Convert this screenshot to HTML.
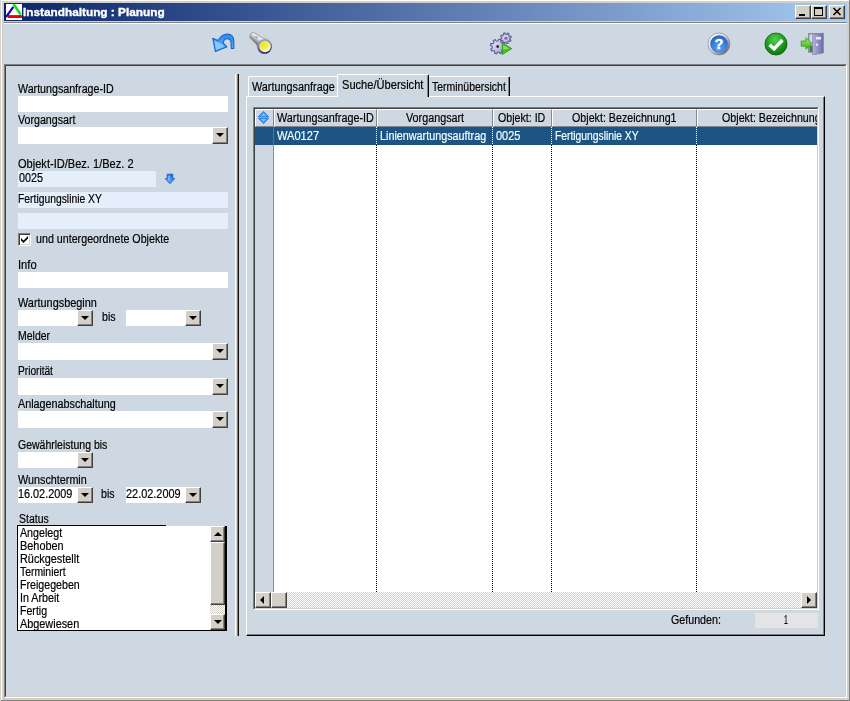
<!DOCTYPE html>
<html>
<head>
<meta charset="utf-8">
<title>Instandhaltung : Planung</title>
<style>
html,body{margin:0;padding:0;}
body{width:850px;height:701px;overflow:hidden;background:#d4d0c8;position:relative;
  font-family:"Liberation Sans",sans-serif;font-size:12px;color:#000;}
div,span{position:absolute;box-sizing:border-box;white-space:nowrap;}
svg{position:absolute;overflow:visible;}
.bg{background:#ced8e2;}
.t{font-size:12px;line-height:13px;height:13px;transform-origin:0 0;-webkit-text-stroke:0.2px currentColor;}
.tb{font-size:11px;line-height:13px;height:13px;transform-origin:0 0;font-weight:bold;color:#fff;-webkit-text-stroke:0.35px #fff;}
.w{color:#f0ffff;}
.inp{background:#fff;}
.ro{background:#e4effb;}
.btn{width:16px;height:16px;background:#d4d0c8;border:1px solid;border-color:#fff #404040 #404040 #fff;
  box-shadow:inset -1px -1px 0 #808080, inset 1px 1px 0 #d4d0c8;}
.btn:after{content:"";position:absolute;left:3px;top:5px;border:4px solid transparent;border-top-color:#000;border-bottom-width:0;width:0;height:0;}
.sb{background:#d4d0c8;border:1px solid;border-color:#fff #404040 #404040 #fff;box-shadow:inset -1px -1px 0 #808080, inset 1px 1px 0 #d4d0c8;}
i{position:absolute;width:0;height:0;border:4px solid transparent;}
i.up{left:3px;top:1px;border-bottom-color:#000;}
i.dn{left:3px;top:5px;border-top-color:#000;}
i.lf{left:0px;top:3px;border-right-color:#000;}
i.rt2{left:5px;top:3px;border-left-color:#000;}
.hd{top:0;height:18px;background:#cfd8e2;border:1px solid;border-color:#fff #808890 #808890 #fff;overflow:hidden;}
.dot{top:36px;width:1px;height:447px;background:repeating-linear-gradient(to bottom,#000 0,#000 1px,transparent 1px,transparent 2px);}
.dotw{top:18px;width:1px;height:18px;background:repeating-linear-gradient(to bottom,#fff 0,#fff 1px,transparent 1px,transparent 2px);}
.trk{background:#eae8e4;background-image:repeating-conic-gradient(#fff 0 25%,#d4d0c8 0 50%);background-size:2px 2px;}
.cap{width:16px;height:14px;background:#d4d0c8;border:1px solid;border-color:#fff #404040 #404040 #fff;box-shadow:inset -1px -1px 0 #808080;}
</style>
</head>
<body>
<!-- window frame -->
<div style="left:1px;top:0px;width:848px;height:1px;background:#fff"></div>
<div style="left:1px;top:0px;width:1px;height:700px;background:#fff"></div>
<div style="left:1px;top:700px;width:849px;height:1px;background:#808080"></div>
<div style="left:849px;top:0px;width:1px;height:701px;background:#808080"></div>

<!-- title bar -->
<div style="left:4px;top:3px;width:843px;height:18px;background:linear-gradient(to right,#0a246a 0%,#a6caf0 100%);"></div>
<svg style="left:6px;top:4px" width="16" height="16" viewBox="0 0 16 16">
  <rect width="16" height="16" fill="#fff"/>
  <rect x="1.8" y="11.1" width="14.2" height="2.9" fill="#f00000"/>
  <path d="M0 13.2 L7.3 2.8" stroke="#0808c0" stroke-width="2.2" fill="none"/>
  <path d="M7.6 0.3 L14.6 10.6" stroke="#18e018" stroke-width="2.6" fill="none"/>
</svg>
<div class="cap" style="left:795px;top:5px"><div style="left:3px;top:8px;width:6px;height:2px;background:#000"></div></div>
<div class="cap" style="left:811px;top:5px"><div style="left:2px;top:1px;width:9px;height:9px;border:1px solid #000;border-top-width:2px"></div></div>
<div class="cap" style="left:829px;top:5px"><svg style="left:3px;top:2px" width="8" height="7" viewBox="0 0 8 7"><path d="M0.5 0 L7.5 7 M7.5 0 L0.5 7" stroke="#000" stroke-width="1.6"/></svg></div>

<!-- client -->
<div class="bg" style="left:4px;top:22px;width:843px;height:42px"></div>
<div style="left:4px;top:22px;width:843px;height:1px;background:#808080"></div>
<div style="left:4px;top:23px;width:843px;height:1px;background:#fff"></div>

<!-- big sunken panel -->
<div class="bg" style="left:4px;top:64px;width:843px;height:634px;border:1px solid;border-color:#808080 #fff #fff #808080"></div>
<div style="left:5px;top:65px;width:841px;height:632px;border:1px solid;border-color:#404040 #d4d0c8 #d4d0c8 #404040"></div>

<!-- TOOLBAR -->
<svg width="0" height="0" style="left:0;top:0"><defs>
  <linearGradient id="gUndo" x1="0" y1="0" x2="0" y2="1"><stop offset="0" stop-color="#2a86e8"/><stop offset="1" stop-color="#6ab8f6"/></linearGradient>
  <linearGradient id="gCyl" gradientUnits="userSpaceOnUse" x1="10" y1="3" x2="4" y2="11"><stop offset="0" stop-color="#fafafa"/><stop offset="0.45" stop-color="#e0e0e0"/><stop offset="1" stop-color="#5c5c64"/></linearGradient>
  <radialGradient id="gLens" cx="0.35" cy="0.3" r="0.75"><stop offset="0" stop-color="#e8e810"/><stop offset="0.55" stop-color="#f0f058"/><stop offset="1" stop-color="#ffffee"/></radialGradient>
  <radialGradient id="gHelp" cx="0.5" cy="0.75" r="0.8"><stop offset="0" stop-color="#5aa4f0"/><stop offset="0.6" stop-color="#3478d4"/><stop offset="1" stop-color="#2460b8"/></radialGradient>
  <linearGradient id="gRing" x1="0.1" y1="0.1" x2="0.9" y2="0.9"><stop offset="0" stop-color="#ffffff"/><stop offset="0.5" stop-color="#d0d0d8"/><stop offset="1" stop-color="#5c5c64"/></linearGradient>
  <radialGradient id="gOk" cx="0.45" cy="0.3" r="0.8"><stop offset="0" stop-color="#52d052"/><stop offset="0.55" stop-color="#1a9a1a"/><stop offset="1" stop-color="#086808"/></radialGradient>
  <linearGradient id="gDoor" x1="0" y1="0" x2="1" y2="0"><stop offset="0" stop-color="#b4b4e0"/><stop offset="1" stop-color="#6c6ca8"/></linearGradient>
  <linearGradient id="gArr" x1="0" y1="0" x2="0" y2="1"><stop offset="0" stop-color="#a0f060"/><stop offset="1" stop-color="#40b020"/></linearGradient>
  <linearGradient id="gGear" x1="0" y1="0" x2="1" y2="1"><stop offset="0" stop-color="#eeeefa"/><stop offset="1" stop-color="#a0a0c8"/></linearGradient>
  <linearGradient id="gRim" x1="0.3" y1="0" x2="0.6" y2="1"><stop offset="0" stop-color="#a8a8dc"/><stop offset="0.5" stop-color="#6c6ca8"/><stop offset="1" stop-color="#1c1c52"/></linearGradient>
</defs></svg>
<!-- undo -->
<svg style="left:211px;top:32px" width="24" height="24" viewBox="0 0 24 24">
  <path d="M1.8 6.3 L7 8.6 C9.5 4 13 2 16.4 2 C20 2 22.6 4.5 22.8 9 L22.8 16.5 L20.3 16.5 L20 10 C19.8 7.5 17.5 6.3 15.5 6.7 C13.8 7 12.5 9 12 10.8 L16 14.8 L4.4 19.5 Z" fill="url(#gUndo)" stroke="#1264cc" stroke-width="1.1" stroke-linejoin="round"/>
  <path d="M3.2 8.5 L7 10.2 L10.5 12 L13.5 14.5 L5.2 17.8 Z" fill="#86c8fa"/>
</svg>
<!-- flashlight -->
<svg style="left:249px;top:31px" width="24" height="24" viewBox="0 0 24 24">
  <path d="M0.8 6.4 L1.3 3 L4.2 1.2 L13 6.6 L20 9.5 L10.5 21 L7.6 13.6 Z" fill="url(#gCyl)" stroke="#8c8c94" stroke-width="0.8" stroke-linejoin="round"/>
  <ellipse cx="7.4" cy="6.4" rx="1.5" ry="1" fill="#9c9cb4" transform="rotate(35 7.4 6.4)"/>
  <circle cx="15.5" cy="15.4" r="7.4" fill="url(#gRim)"/>
  <circle cx="16" cy="15.5" r="5.7" fill="url(#gLens)"/>
</svg>
<!-- gears -->
<svg style="left:489px;top:32px" width="24" height="24" viewBox="0 0 24 24">
  <path d="M20.7 7.3 L22.0 8.2 L21.2 9.6 L19.8 9.0 L18.8 9.7 L19.1 11.3 L17.6 11.7 L17.0 10.3 L15.8 10.2 L14.9 11.5 L13.5 10.7 L14.1 9.3 L13.4 8.3 L11.8 8.6 L11.4 7.1 L12.8 6.5 L12.9 5.3 L11.6 4.4 L12.4 3.0 L13.8 3.6 L14.8 2.9 L14.5 1.3 L16.0 0.9 L16.6 2.3 L17.8 2.4 L18.7 1.1 L20.1 1.9 L19.5 3.3 L20.2 4.3 L21.8 4.0 L22.2 5.5 L20.8 6.1 Z" fill="url(#gGear)" stroke="#5e5e92" stroke-width="1.1" stroke-linejoin="round"/>
  <circle cx="16.8" cy="6.3" r="1.5" fill="#7070a4"/>
  <path d="M14.3 14.9 L16.0 15.7 L15.4 17.8 L13.5 17.5 L12.5 18.8 L13.1 20.5 L11.2 21.6 L10.1 20.0 L8.4 20.2 L7.6 21.9 L5.5 21.3 L5.8 19.4 L4.5 18.4 L2.8 19.0 L1.7 17.1 L3.3 16.0 L3.1 14.3 L1.4 13.5 L2.0 11.4 L3.9 11.7 L4.9 10.4 L4.3 8.7 L6.2 7.6 L7.3 9.2 L9.0 9.0 L9.8 7.3 L11.9 7.9 L11.6 9.8 L12.9 10.8 L14.6 10.2 L15.7 12.1 L14.1 13.2 Z" fill="url(#gGear)" stroke="#5e5e92" stroke-width="1.1" stroke-linejoin="round"/>
  <circle cx="8.7" cy="14.6" r="2.4" fill="#c4c4e4"/>
  <circle cx="8.7" cy="14.6" r="1.3" fill="#14142c"/>
  <path d="M13.2 11.2 L22.8 16.6 L13.2 22.5 Z" fill="#4cc028" stroke="#2a9614" stroke-width="0.9" stroke-linejoin="round"/>
  <path d="M14.2 13.2 L20 16.5 L14.2 17.5 Z" fill="#8ce058"/>
</svg>
<!-- help -->
<svg style="left:707px;top:32px" width="24" height="24" viewBox="0 0 24 24">
  <circle cx="12" cy="12" r="11" fill="url(#gRing)" stroke="#888890" stroke-width="0.7"/>
  <circle cx="12" cy="12" r="8.8" fill="url(#gHelp)"/>
  <text x="12" y="17" text-anchor="middle" font-family="Liberation Sans" font-weight="bold" font-size="14.5" fill="#fff" stroke="#fff" stroke-width="0.4" letter-spacing="0">?</text>
</svg>
<!-- ok -->
<svg style="left:764px;top:32px" width="24" height="24" viewBox="0 0 24 24">
  <circle cx="12" cy="12" r="11" fill="url(#gOk)" stroke="#0a5c0a" stroke-width="0.8"/>
  <path d="M5.6 12.7 L10.1 16.9 L18.4 8" fill="none" stroke="#fff" stroke-width="3.4" stroke-linejoin="miter"/>
</svg>
<!-- exit -->
<svg style="left:800px;top:32px" width="24" height="24" viewBox="0 0 24 24">
  <rect x="8" y="1" width="15.3" height="19.7" fill="#8c8c9c"/>
  <rect x="9.5" y="2.5" width="11.5" height="17.5" fill="#d8e0f0"/><rect x="9.5" y="13.5" width="4" height="6.5" fill="#3a8a2a"/>
  <path d="M12.4 3.2 L23.3 1 V21 L12.6 22.8 Z" fill="url(#gDoor)" stroke="#6a6aa0" stroke-width="0.5"/>
  <rect x="16" y="4.9" width="5" height="2.6" fill="#e8e8fa"/>
  <rect x="16" y="11.7" width="2.1" height="2.1" fill="#e8e8fa"/>
  <path d="M1.2 9.1 H5.9 V5.7 L12.2 11.5 L5.9 17.2 V14.2 H1.2 Z" fill="url(#gArr)" stroke="#2a9a18" stroke-width="0.8" stroke-linejoin="round"/>
</svg>

<!-- LEFT -->
<!-- separator -->
<div style="left:235px;top:74px;width:1px;height:562px;background:#fff"></div>
<div style="left:236px;top:74px;width:1px;height:562px;background:#d4d0c8"></div>
<div style="left:237px;top:74px;width:1px;height:562px;background:#808080"></div>
<div style="left:238px;top:74px;width:1px;height:562px;background:#101010"></div>

<div class="inp" style="left:18px;top:96px;width:210px;height:16px"></div>

<div class="inp" style="left:18px;top:127px;width:210px;height:17px"><div class="btn" style="right:0;top:0;height:17px"></div></div>

<div class="ro" style="left:18px;top:171px;width:138px;height:16px"></div>
<svg style="left:164px;top:173px" width="12" height="12" viewBox="0 0 12 12">
  <defs><linearGradient id="gDn" x1="0" y1="0" x2="0" y2="1"><stop offset="0" stop-color="#1c5cc4"/><stop offset="0.5" stop-color="#3a8ae8"/><stop offset="1" stop-color="#5aa8f8"/></linearGradient></defs>
  <path d="M3.2 1.2 H8.8 V5.6 H10.8 L6 10.8 L1.2 5.6 H3.2 Z" fill="url(#gDn)" stroke="#1c5cc4" stroke-width="0.8" stroke-linejoin="round"/>
  <path d="M4.2 2.6 H6.2 V6.4 L5 8 L3.4 6.4 H4.2 Z" fill="#8cc8ff" opacity="0.8"/>
</svg>
<div class="ro" style="left:18px;top:192px;width:210px;height:16px"></div>
<div class="ro" style="left:18px;top:213px;width:210px;height:16px"></div>

<div style="left:18px;top:233px;width:13px;height:13px;background:#fff;border:1px solid;border-color:#808080 #fff #fff #808080;box-shadow:inset 1px 1px 0 #404040, inset -1px -1px 0 #d4d0c8">
  <svg style="left:2px;top:2px" width="7" height="7" viewBox="0 0 7 7"><path d="M0 2 L2.5 4.5 L7 0 V2.6 L2.5 7.1 L0 4.6 Z" fill="#000"/></svg>
</div>

<div class="inp" style="left:18px;top:272px;width:210px;height:16px"></div>

<div class="inp" style="left:18px;top:310px;width:75px;height:16px"><div class="btn" style="right:0;top:0"></div></div>
<div class="inp" style="left:126px;top:310px;width:75px;height:16px"><div class="btn" style="right:0;top:0"></div></div>

<div class="inp" style="left:18px;top:343px;width:210px;height:17px"><div class="btn" style="right:0;top:0;height:17px"></div></div>

<div class="inp" style="left:18px;top:378px;width:210px;height:17px"><div class="btn" style="right:0;top:0;height:17px"></div></div>

<div class="inp" style="left:18px;top:411px;width:210px;height:17px"><div class="btn" style="right:0;top:0;height:17px"></div></div>

<div class="inp" style="left:18px;top:452px;width:75px;height:16px"><div class="btn" style="right:0;top:0"></div></div>

<div class="inp" style="left:18px;top:487px;width:75px;height:16px"><div class="btn" style="right:0;top:0"></div></div>
<div class="inp" style="left:126px;top:487px;width:75px;height:16px"><div class="btn" style="right:0;top:0"></div></div>

<!-- listbox -->
<div class="inp" style="left:17px;top:526px;width:210px;height:105px;border:solid #000;border-width:0 2px 1px 1px"></div>
<div style="left:17px;top:525px;width:149px;height:1px;background:#000"></div>
<!-- listbox scrollbar -->
<div class="trk" style="left:210px;top:526px;width:15px;height:104px"></div>
<div class="sb" style="left:210px;top:526px;width:15px;height:16px"><i class="up"></i></div>
<div class="sb" style="left:210px;top:542px;width:15px;height:63px"></div>
<div class="sb" style="left:210px;top:614px;width:15px;height:16px"><i class="dn"></i></div>

<!-- RIGHT -->
<!-- tab panel -->
<div style="left:246px;top:96px;width:579px;height:540px;border:solid;border-width:1px;border-color:#fff #000 #000 #fff;box-shadow:inset -1px -1px 0 #808080"></div>
<!-- tab 1 -->
<div style="left:248px;top:76px;width:90px;height:20px;border:1px solid #fff;border-bottom:0;border-right:0;border-radius:2px 0 0 0"></div>
<!-- tab 3 -->
<div style="left:429px;top:76px;width:81px;height:20px;border:solid;border-width:1px 1px 0 0;border-color:#fff #000 #000 #fff;border-radius:0 2px 0 0;box-shadow:inset -1px 0 0 #808080"></div>
<!-- tab 2 selected -->
<div class="bg" style="left:337px;top:74px;width:92px;height:23px;border:solid;border-width:1px 1px 0 1px;border-color:#fff #000 #000 #fff;border-radius:2px 2px 0 0;box-shadow:inset -1px 0 0 #808080"></div>

<!-- grid -->
<div style="left:253px;top:107px;width:566px;height:503px;background:#fff;border:1px solid;border-color:#808080 #fff #fff #808080"></div>
<div style="left:254px;top:108px;width:564px;height:501px;border:1px solid;border-color:#404040 #d4d0c8 #d4d0c8 #404040"></div>
<div id="gridc" style="left:255px;top:109px;width:562px;height:483px;overflow:hidden">
  <!-- first column body -->
  <div style="left:0;top:18px;width:18px;height:465px;background:#ced8e2"></div>
  <div style="left:18px;top:18px;width:1px;height:465px;background:#868e98"></div>
  <!-- header -->
  <div class="hd" style="left:0;width:19px"></div>
  <div class="hd" style="left:19px;width:103px"></div>
  <div class="hd" style="left:122px;width:116px"></div>
  <div class="hd" style="left:238px;width:59px"></div>
  <div class="hd" style="left:297px;width:145px"></div>
  <div class="hd" style="left:442px;width:156px"></div>
  <svg style="left:3px;top:2px" width="11" height="13" viewBox="0 0 11 13">
    <path d="M5.5 0.4 L10.6 5.8 H0.4 Z" fill="#3f9af4" stroke="#1c6ccc" stroke-width="0.8" stroke-linejoin="round"/>
    <path d="M5.5 12.6 L10.6 7.2 H0.4 Z" fill="#3f9af4" stroke="#1c6ccc" stroke-width="0.8" stroke-linejoin="round"/>
    <path d="M5.5 2.2 L8 5 H3 Z" fill="#7cc4ff"/>
    <path d="M5.5 10.8 L8 8 H3 Z" fill="#7cc4ff"/>
  </svg>
  <!-- selected row -->
  <div style="left:0;top:18px;width:562px;height:18px;background:#1e5483"></div><div style="left:18px;top:18px;width:1px;height:18px;background:#4a78a0"></div>
  <!-- dotted dividers -->
  <div class="dot" style="left:121px"></div>
  <div class="dot" style="left:237px"></div>
  <div class="dot" style="left:296px"></div>
  <div class="dot" style="left:441px"></div>
  <div class="dotw" style="left:121px"></div>
  <div class="dotw" style="left:237px"></div>
  <div class="dotw" style="left:296px"></div>
  <div class="dotw" style="left:441px"></div>
</div>
<!-- h scrollbar -->
<div class="trk" style="left:255px;top:592px;width:562px;height:16px"></div>
<div class="sb" style="left:255px;top:592px;width:16px;height:16px"><i class="lf" style="left:0px;top:3px"></i></div>
<div class="sb" style="left:271px;top:592px;width:16px;height:16px"></div>
<div class="sb" style="left:801px;top:592px;width:16px;height:16px"><i class="rt2"></i></div>

<div style="left:755px;top:613px;width:63px;height:15px;background:#e4e4e4"></div>

<!-- TEXT -->
<div style="left:0;top:0;width:850px;height:701px;will-change:transform">
<span class="tb" style="left:23.20px;top:5.5px;transform:scaleX(1.0728)">Instandhaltung : Planung</span>
<span class="t" style="left:17.89px;top:82.5px;transform:scaleX(0.8889)">Wartungsanfrage-ID</span>
<span class="t" style="left:17.89px;top:113.5px;transform:scaleX(0.8868)">Vorgangsart</span>
<span class="t" style="left:18.42px;top:157.5px;transform:scaleX(0.9217)">Objekt-ID/Bez. 1/Bez. 2</span>
<span class="t" style="left:18.55px;top:171.5px;transform:scaleX(0.8932)">0025</span>
<span class="t" style="left:18.14px;top:192.5px;transform:scaleX(0.8614)">Fertigungslinie XY</span>
<span class="t" style="left:36.33px;top:232.5px;transform:scaleX(0.8911)">und untergeordnete Objekte</span>
<span class="t" style="left:17.95px;top:258.5px;transform:scaleX(0.9306)">Info</span>
<span class="t" style="left:17.89px;top:296.5px;transform:scaleX(0.9070)">Wartungsbeginn</span>
<span class="t" style="left:101.84px;top:310.5px;transform:scaleX(0.8850)">bis</span>
<span class="t" style="left:18.13px;top:329.5px;transform:scaleX(0.8732)">Melder</span>
<span class="t" style="left:18.16px;top:364.5px;transform:scaleX(0.8447)">Priorität</span>
<span class="t" style="left:18.00px;top:397.5px;transform:scaleX(0.8981)">Anlagenabschaltung</span>
<span class="t" style="left:18.45px;top:438.5px;transform:scaleX(0.8752)">Gewährleistung bis</span>
<span class="t" style="left:17.89px;top:473.5px;transform:scaleX(0.8992)">Wunschtermin</span>
<span class="t" style="left:18.21px;top:487.5px;transform:scaleX(0.9041)">16.02.2009</span>
<span class="t" style="left:101.34px;top:487.5px;transform:scaleX(0.8850)">bis</span>
<span class="t" style="left:126.43px;top:487.5px;transform:scaleX(0.9087)">22.02.2009</span>
<span class="t" style="left:19.45px;top:512.5px;transform:scaleX(0.8727)">Status</span>
<span class="t" style="left:20.00px;top:526.5px;transform:scaleX(0.8889)">Angelegt</span>
<span class="t" style="left:20.09px;top:539.5px;transform:scaleX(0.9081)">Behoben</span>
<span class="t" style="left:20.09px;top:552.5px;transform:scaleX(0.9058)">Rückgestellt</span>
<span class="t" style="left:20.28px;top:565.5px;transform:scaleX(0.8649)">Terminiert</span>
<span class="t" style="left:20.11px;top:578.5px;transform:scaleX(0.8869)">Freigegeben</span>
<span class="t" style="left:19.99px;top:591.5px;transform:scaleX(0.8936)">In Arbeit</span>
<span class="t" style="left:20.12px;top:604.5px;transform:scaleX(0.8831)">Fertig</span>
<span class="t" style="left:20.00px;top:617.5px;transform:scaleX(0.9052)">Abgewiesen</span>
<span class="t" style="left:251.89px;top:80.5px;transform:scaleX(0.9033)">Wartungsanfrage</span>
<span class="t" style="left:341.82px;top:78.5px;transform:scaleX(0.9247)">Suche/Übersicht</span>
<span class="t" style="left:432.18px;top:80.5px;transform:scaleX(0.8711)">Terminübersicht</span>
<span class="t" style="left:276.69px;top:111.5px;transform:scaleX(0.9001)">Wartungsanfrage-ID</span>
<span class="t" style="left:405.99px;top:111.5px;transform:scaleX(0.8977)">Vorgangsart</span>
<span class="t" style="left:498.25px;top:111.5px;transform:scaleX(0.8863)">Objekt: ID</span>
<span class="t" style="left:571.94px;top:111.5px;transform:scaleX(0.8903)">Objekt: Bezeichnung1</span>
<div style="left:700px;top:110px;width:117px;height:16px;overflow:hidden"><span class="t" style="left:21.84px;top:1.5px;transform:scaleX(0.8912)">Objekt: Bezeichnung2</span></div>
<span class="t w" style="left:277.18px;top:129.5px;transform:scaleX(0.9226)">WA0127</span>
<span class="t w" style="left:379.60px;top:129.5px;transform:scaleX(0.8989)">Linienwartungsauftrag</span>
<span class="t w" style="left:496.34px;top:129.5px;transform:scaleX(0.9126)">0025</span>
<span class="t w" style="left:555.04px;top:129.5px;transform:scaleX(0.8583)">Fertigungslinie XY</span>
<span class="t" style="left:671.04px;top:613.5px;transform:scaleX(0.8901)">Gefunden:</span>
<span class="t" style="left:783.50px;top:613.5px;transform:scaleX(0.5714)">1</span>
</div>
</body>
</html>
